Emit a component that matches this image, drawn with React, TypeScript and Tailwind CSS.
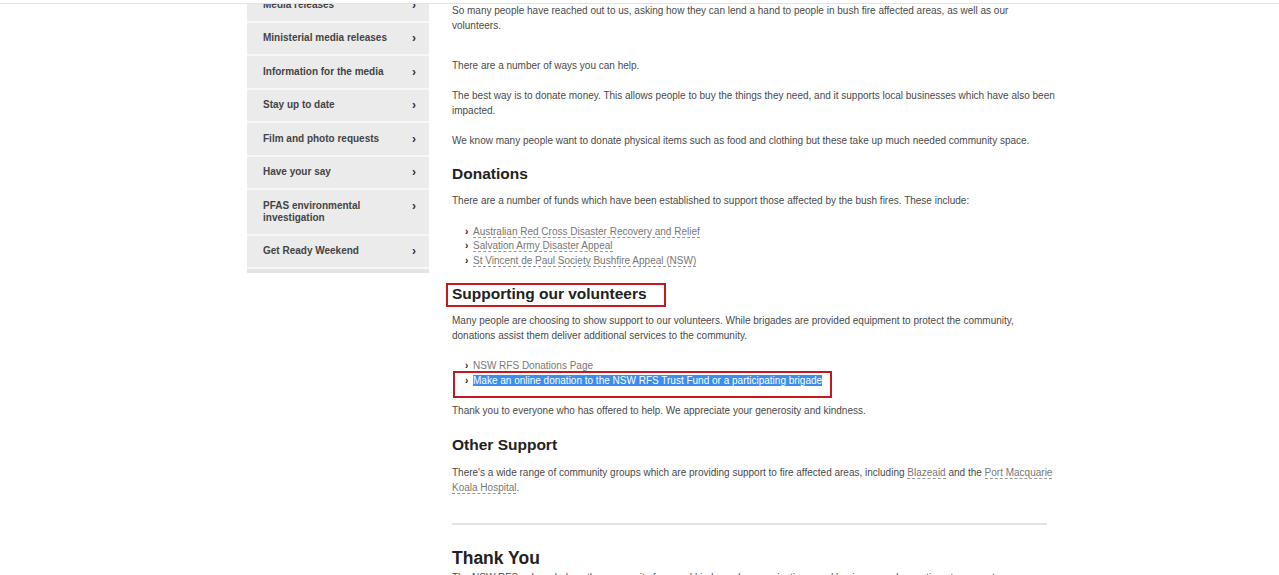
const menu = [
  'Media releases',
  'Ministerial media releases',
  'Information for the media',
  'Stay up to date',
  'Film and photo requests',
  'Have your say',
  'PFAS environmental investigation',
  'Get Ready Weekend',
];

function LinkItem({ children }: { children: React.ReactNode }) {
  return (
    <li>
      <span className="inline-block w-[21px] pl-[13px] text-[#222] font-bold">›</span>
      <a href="#" className="text-[#777] border-b border-dashed border-[#999]">
        {children}
      </a>
    </li>
  );
}

export default function App() {
  return (
    <main className="min-h-screen bg-white font-['Liberation_Sans',Arial,sans-serif] overflow-hidden">
      <div className="fixed top-0 inset-x-0 h-[4px] bg-white border-b border-[#e4e4e4] z-10" />

      <div className="ml-[247px] w-[810px] flex items-start gap-[23px]">
        <nav className="w-[182px] shrink-0 mt-[-11px] bg-[#e4e4e4] pb-[4px]">
          {menu.map((item) => (
            <a
              key={item}
              href="#"
              className="flex items-start justify-between bg-[#ebebeb] border-b-2 border-[#f7f7f7] pl-[16px] pr-[13px] py-[9.75px] text-[10px] leading-[12px] font-bold text-[#444]"
            >
              <span className="w-[132px]">{item}</span>
              <span className="text-[12px] leading-[12px] text-[#333]">›</span>
            </a>
          ))}
        </nav>

        <article className="w-[604px] mt-[2.5px] text-[10px] leading-[15px] text-[#4a4a4a]">
          <p>
            So many people have reached out to us, asking how they can lend a hand to people in bush fire affected areas, as well as our
            volunteers.
          </p>
          <p className="mt-[25px]">There are a number of ways you can help.</p>
          <p className="mt-[15px]">
            The best way is to donate money. This allows people to buy the things they need, and it supports local businesses which have also been
            impacted.
          </p>
          <p className="mt-[15px]">
            We know many people want to donate physical items such as food and clothing but these take up much needed community space.
          </p>

          <h3 className="mt-[16.5px] text-[15.5px] leading-[20px] font-bold text-[#222]">Donations</h3>
          <p className="mt-[8.5px]">
            There are a number of funds which have been established to support those affected by the bush fires. These include:
          </p>
          <ul className="mt-[17px] leading-[14.5px]">
            <LinkItem>Australian Red Cross Disaster Recovery and Relief</LinkItem>
            <LinkItem>Salvation Army Disaster Appeal</LinkItem>
            <LinkItem>St Vincent de Paul Society Bushfire Appeal (NSW)</LinkItem>
          </ul>

          <div className="relative mt-[16px]">
            <h3 className="text-[15.5px] leading-[20px] font-bold text-[#222]">Supporting our volunteers</h3>
            <div className="absolute left-[-6px] top-[-1px] w-[220px] h-[24px] border-2 border-[#c8171e]" />
          </div>
          <p className="mt-[10px] leading-[14.5px]">
            Many people are choosing to show support to our volunteers. While brigades are provided equipment to protect the community,
            donations assist them deliver additional services to the community.
          </p>
          <ul className="mt-[15px] leading-[15px]">
            <LinkItem>NSW RFS Donations Page</LinkItem>
            <li className="relative">
              <span className="inline-block w-[21px] pl-[13px] text-[#222] font-bold">›</span>
              <a href="#" className="bg-[#3a8ef0] text-white">
                Make an online donation to the NSW RFS Trust Fund or a participating brigade
              </a>
              <div className="absolute left-[1px] top-[-2px] w-[379px] h-[27px] border-2 border-[#c8171e]" />
            </li>
          </ul>
          <p className="mt-[15px]">Thank you to everyone who has offered to help. We appreciate your generosity and kindness.</p>

          <h3 className="mt-[16.5px] text-[15.5px] leading-[20px] font-bold text-[#222]">Other Support</h3>
          <p className="mt-[10px]">
            There's a wide range of community groups which are providing support to fire affected areas, including{' '}
            <a href="#" className="text-[#777] border-b border-dashed border-[#999]">Blazeaid</a> and the{' '}
            <a href="#" className="text-[#777] border-b border-dashed border-[#999]">Port Macquarie Koala Hospital</a>.
          </p>

          <hr className="mt-[28px] w-[595px] border-t-2 border-[#e2e2e2]" />

          <h2 className="mt-[22px] text-[17.5px] leading-[22px] font-bold text-[#222]">Thank You</h2>
          <p className="mt-[1px]">
            The NSW RFS acknowledges the generosity from and kind people, organisations, and businesses who continue to support our volunteers and
            their communities.
          </p>
        </article>
      </div>
    </main>
  );
}
